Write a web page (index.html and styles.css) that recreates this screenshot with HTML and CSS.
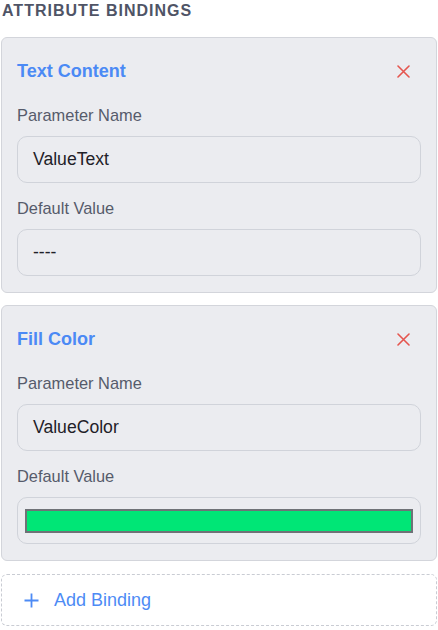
FILE: index.html
```html
<!DOCTYPE html>
<html>
<head>
<meta charset="utf-8">
<link rel="stylesheet" href="styles.css">
</head>
<body>
<div class="panel">
  <div class="section-title">ATTRIBUTE BINDINGS</div>
  <div class="list">
    <div class="card">
      <div class="card-head">
        <span class="card-title">Text Content</span>
        <span class="remove">
          <svg width="13" height="13" viewBox="0 0 13 13"><path d="M1 1L12 12M12 1L1 12" stroke="#e5554f" stroke-width="1.6" fill="none" stroke-linecap="round"/></svg>
        </span>
      </div>
      <div class="field">
        <div class="label">Parameter Name</div>
        <div class="input">ValueText</div>
      </div>
      <div class="field">
        <div class="label">Default Value</div>
        <div class="input">----</div>
      </div>
    </div>
    <div class="card">
      <div class="card-head">
        <span class="card-title">Fill Color</span>
        <span class="remove">
          <svg width="13" height="13" viewBox="0 0 13 13"><path d="M1 1L12 12M12 1L1 12" stroke="#e5554f" stroke-width="1.6" fill="none" stroke-linecap="round"/></svg>
        </span>
      </div>
      <div class="field">
        <div class="label">Parameter Name</div>
        <div class="input">ValueColor</div>
      </div>
      <div class="field">
        <div class="label">Default Value</div>
        <div class="input color-input"><div class="swatch"></div></div>
      </div>
    </div>
    <div class="add">
      <svg width="15" height="15" viewBox="0 0 15 15"><path d="M7.5 0.5V14.5M0.5 7.5H14.5" stroke="#4d8bf5" stroke-width="1.8" fill="none"/></svg>
      <span>Add Binding</span>
    </div>
  </div>
</div>
</body>
</html>
```
FILE: styles.css
```css
* { box-sizing: border-box; }
html, body { margin: 0; padding: 0; background: #ffffff; }
body { font-family: "Liberation Sans", Arial, sans-serif; }
.panel { width: 438px; padding: 0 1px 0 1px; }
.section-title {
  font-size: 16px;
  line-height: 22px;
  font-weight: bold;
  letter-spacing: 1px;
  color: #4f5466;
  padding-left: 1px;
  margin-bottom: 15px;
}
.list { display: flex; flex-direction: column; gap: 12px; }
.card {
  background: #ebecf0;
  border: 1px solid #d3d5db;
  border-radius: 6px;
  padding: 16px 15px 16px 15px;
}
.card-head {
  height: 34px;
  display: flex;
  align-items: center;
  justify-content: space-between;
  margin-bottom: 16px;
}
.card-title {
  font-size: 18px;
  font-weight: bold;
  color: #4b8af5;
}
.remove {
  width: 36px;
  height: 34px;
  display: flex;
  align-items: center;
  justify-content: center;
}
.field + .field { margin-top: 14px; }
.label {
  font-size: 16.4px;
  line-height: 22px;
  color: #565b6b;
  margin-bottom: 10px;
}
.input {
  height: 47px;
  border: 1px solid #d0d3da;
  border-radius: 10px;
  padding: 0 15px;
  display: flex;
  align-items: center;
  font-size: 17.6px;
  color: #1f2128;
  background: #ebecf0;
}
.color-input { padding: 11px 7px 10px 7px; align-items: stretch; }
.swatch {
  flex: 1;
  background: #00e676;
  border: 2px solid #6f7277;
}
.add {
  height: 52px;
  margin-top: 1px;
  border: 1px dashed #c9ccd3;
  border-radius: 6px;
  display: flex;
  align-items: center;
  padding-left: 22px;
  gap: 15px;
  font-size: 18px;
  color: #4d8bf5;
}
```
